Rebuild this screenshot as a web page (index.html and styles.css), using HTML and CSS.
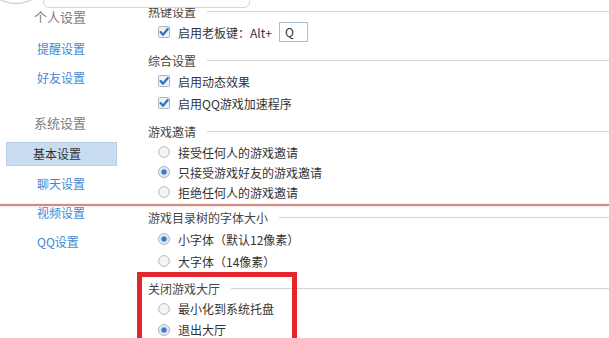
FILE: index.html
```html
<!DOCTYPE html>
<html lang="zh-CN">
<head>
<meta charset="utf-8">
<title>设置</title>
<link rel="stylesheet" href="styles.css">
</head>
<body>
<div class="window">
  <aside class="sidebar">
    <div class="nav-group first">
      <div class="nav-title">个人设置</div>
      <a class="nav-item">提醒设置</a>
      <a class="nav-item">好友设置</a>
    </div>
    <div class="nav-group second">
      <div class="nav-title">系统设置</div>
      <a class="nav-item active">基本设置</a>
      <a class="nav-item">聊天设置</a>
      <a class="nav-item">视频设置</a>
      <a class="nav-item">QQ设置</a>
    </div>
  </aside>

  <main class="content">
    <section class="group g1">
      <div class="group-title"><span>热键设置</span></div>
      <div class="option">
        <svg class="checkbox" viewBox="0 0 12 12"><rect x="0.5" y="0.5" width="11" height="11" rx="1" fill="#eef2f7" stroke="#a7b5c5"/><path d="M2.6 6.1 L5 8.7 L9.8 3" fill="none" stroke="#2f70c2" stroke-width="2.2" stroke-linecap="round" stroke-linejoin="round"/></svg>
        <span>启用老板键：Alt+</span>
        <span class="keybox">Q</span>
      </div>
    </section>

    <section class="group g2">
      <div class="group-title"><span>综合设置</span></div>
      <div class="option">
        <svg class="checkbox" viewBox="0 0 12 12"><rect x="0.5" y="0.5" width="11" height="11" rx="1" fill="#eef2f7" stroke="#a7b5c5"/><path d="M2.6 6.1 L5 8.7 L9.8 3" fill="none" stroke="#2f70c2" stroke-width="2.2" stroke-linecap="round" stroke-linejoin="round"/></svg>
        <span>启用动态效果</span>
      </div>
      <div class="option">
        <svg class="checkbox" viewBox="0 0 12 12"><rect x="0.5" y="0.5" width="11" height="11" rx="1" fill="#eef2f7" stroke="#a7b5c5"/><path d="M2.6 6.1 L5 8.7 L9.8 3" fill="none" stroke="#2f70c2" stroke-width="2.2" stroke-linecap="round" stroke-linejoin="round"/></svg>
        <span>启用QQ游戏加速程序</span>
      </div>
    </section>

    <section class="group g3">
      <div class="group-title"><span>游戏邀请</span></div>
      <div class="option">
        <svg class="radio" viewBox="0 0 12 12"><circle cx="6" cy="6" r="5.4" fill="#f4f4f4" stroke="#b9b9b9"/></svg>
        <span>接受任何人的游戏邀请</span>
      </div>
      <div class="option">
        <svg class="radio" viewBox="0 0 12 12"><circle cx="6" cy="6" r="5.4" fill="#f2f6fa" stroke="#98aec6"/><circle cx="6" cy="6" r="3.6" fill="#b9d0ea"/><circle cx="6" cy="6" r="2.5" fill="#3a78c2"/></svg>
        <span>只接受游戏好友的游戏邀请</span>
      </div>
      <div class="option">
        <svg class="radio" viewBox="0 0 12 12"><circle cx="6" cy="6" r="5.4" fill="#f4f4f4" stroke="#b9b9b9"/></svg>
        <span>拒绝任何人的游戏邀请</span>
      </div>
    </section>

    <section class="group g4">
      <div class="group-title"><span>游戏目录树的字体大小</span></div>
      <div class="option">
        <svg class="radio" viewBox="0 0 12 12"><circle cx="6" cy="6" r="5.4" fill="#f2f6fa" stroke="#98aec6"/><circle cx="6" cy="6" r="3.6" fill="#b9d0ea"/><circle cx="6" cy="6" r="2.5" fill="#3a78c2"/></svg>
        <span>小字体（默认12像素）</span>
      </div>
      <div class="option">
        <svg class="radio" viewBox="0 0 12 12"><circle cx="6" cy="6" r="5.4" fill="#f4f4f4" stroke="#b9b9b9"/></svg>
        <span>大字体（14像素）</span>
      </div>
    </section>

    <section class="group g5">
      <div class="group-title"><span>关闭游戏大厅</span></div>
      <div class="option">
        <svg class="radio" viewBox="0 0 12 12"><circle cx="6" cy="6" r="5.4" fill="#f4f4f4" stroke="#b9b9b9"/></svg>
        <span>最小化到系统托盘</span>
      </div>
      <div class="option">
        <svg class="radio" viewBox="0 0 12 12"><circle cx="6" cy="6" r="5.4" fill="#f2f6fa" stroke="#98aec6"/><circle cx="6" cy="6" r="3.6" fill="#b9d0ea"/><circle cx="6" cy="6" r="2.5" fill="#3a78c2"/></svg>
        <span>退出大厅</span>
      </div>
    </section>
  </main>
</div>

<div class="avatar-ring"></div>
<div class="search-box"></div>
<div class="splice-line"></div>
<div class="highlight-box"></div>
</body>
</html>
```

FILE: styles.css
```css
* {
  box-sizing: border-box;
}

html, body {
  margin: 0;
  padding: 0;
  background: #ffffff;
}

body {
  width: 609px;
  height: 338px;
  overflow: hidden;
  position: relative;
  font-family: "Noto Sans CJK SC", "Noto Sans", sans-serif;
  font-size: 12px;
  color: #333333;
}

.window {
  display: flex;
  width: 100%;
  height: 100%;
}

/* ---------- sidebar ---------- */
.sidebar {
  flex: none;
  width: 130px;
  padding-top: 2px;
}

.nav-group {
  display: flex;
  flex-direction: column;
}

.nav-group.second {
  margin-top: 16px;
}

.nav-title {
  height: 29px;
  line-height: 29px;
  padding-left: 34px;
  font-size: 13px;
  color: #7d7d7d;
}

.first .nav-title {
  margin-bottom: 3px;
}

.second .nav-title {
  margin-bottom: 5px;
}

.nav-item {
  display: block;
  height: 29px;
  line-height: 29px;
  padding-left: 37px;
  color: #4389d2;
}

.nav-item.active {
  margin-left: 6px;
  width: 111px;
  height: 24px;
  line-height: 22px;
  padding-left: 26px;
  margin-bottom: 2.5px;
  border: 1px solid #b7cfe7;
  background: #c8ddf1;
  color: #333333;
}

/* ---------- content ---------- */
.content {
  flex: 1;
  padding-left: 18px;
  padding-top: 1px;
}

.group {
  display: flex;
  flex-direction: column;
}

.group-title {
  display: flex;
  align-items: center;
  height: 20px;
  color: #454545;
}

.group-title::after {
  content: "";
  flex: 1;
  height: 1px;
  margin-left: 11px;
  background: #d4d4d4;
}

.option {
  display: flex;
  align-items: center;
  height: 22px;
  padding-left: 10px;
}

.checkbox,
.radio {
  flex: none;
  width: 12px;
  height: 12px;
  margin-right: 8px;
}

.keybox {
  width: 29px;
  height: 20px;
  margin-left: 7px;
  padding-left: 5px;
  line-height: 18px;
  border: 1px solid #aabed5;
  background: #ffffff;
  color: #333333;
}

.g2 { margin-top: 7px; }

.g3 { margin-top: 7px; }
.g3 .group-title { height: 21px; }
.g3 .option { height: 20px; }

.g4 { margin-top: 4px; }
.g4 .group-title { height: 22px; }

.g5 { margin-top: 6px; }
.g5 .option { height: 21px; }

/* ---------- overlays ---------- */
.avatar-ring {
  position: absolute;
  left: -20px;
  top: -68px;
  width: 72px;
  height: 72px;
  border: 1.5px solid #c4c4c4;
  border-radius: 50%;
}

.search-box {
  position: absolute;
  left: 43px;
  top: -20px;
  width: 207px;
  height: 28px;
  border: 1px solid #d6d6d6;
  border-radius: 6px;
  background: #ffffff;
}

.splice-line {
  position: absolute;
  left: 0;
  right: 0;
  top: 204px;
  height: 2px;
  background: #d48a87;
  box-shadow: 0 0 2px #f2c6c3;
}

.highlight-box {
  position: absolute;
  left: 137px;
  top: 272px;
  width: 160px;
  height: 80px;
  border: 5px solid #e3262d;
}
```
